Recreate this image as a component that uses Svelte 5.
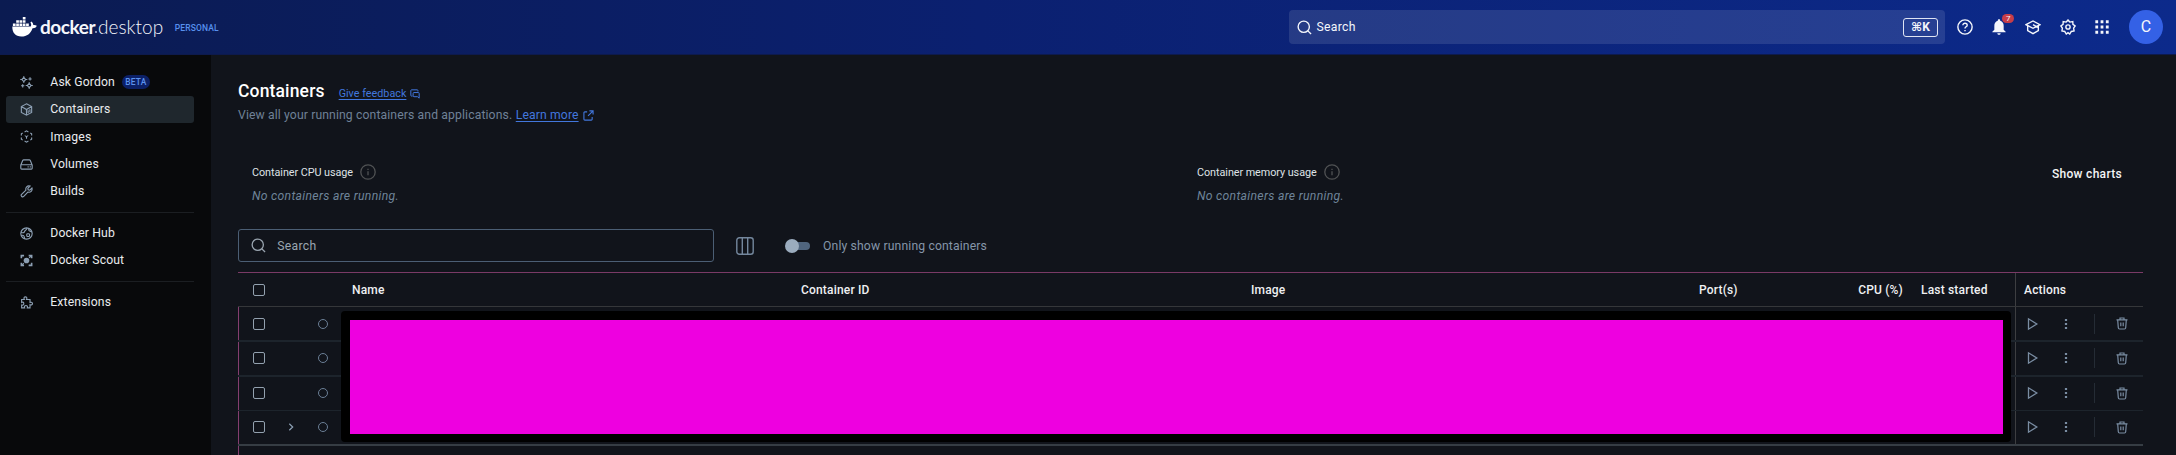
<script>
  const groups = [
    [
      { icon: 'spark', label: 'Ask Gordon', badge: 'BETA' },
      { icon: 'cube', label: 'Containers', active: true },
      { icon: 'image', label: 'Images' },
      { icon: 'volume', label: 'Volumes' },
      { icon: 'wrench', label: 'Builds' }
    ],
    [
      { icon: 'hub', label: 'Docker Hub' },
      { icon: 'scout', label: 'Docker Scout' }
    ],
    [{ icon: 'puzzle', label: 'Extensions' }]
  ];
  const rows = [{}, {}, {}, { group: true }];
</script>

{#snippet icon(name)}
  {#if name === 'spark'}
    <svg class="ic" viewBox="0 0 24 24"><path d="M7 2.500 10.500 6.500 7 10.500 3.500 6.500zM17 13.500l3.500 4-3.500 4-3.500-4z" /><path d="M7 .5v2M7 10.500v2M.5 6.500h3M10.500 6.500h3M17 11.500v2M17 21.500v2M10.500 17.500h3M20.500 17.500h3M18.500 2.500v6M15.500 5.500h6M5 15v6M2 18h6" /></svg>
  {:else if name === 'cube'}
    <svg class="ic" viewBox="0 0 24 24"><path d="M12 1.500 21.500 6.500v11L12 22.500 2.500 17.500v-11zM2.500 6.500 12 12l9.500-5.500M12 12v10.500" /><path d="M15 13.500v5M18.300 11.500v5.500" /></svg>
  {:else if name === 'image'}
    <svg class="ic" viewBox="0 0 24 24"><path d="M8.500 3.500 12 1.500l3.500 2M19 5.500l2.500 1.500v3M21.500 14v3L19 18.700M15.500 20.500 12 22.500l-3.500-2M5 18.700 2.500 17v-3M2.500 10V7L5 5.500" /><path class="fill" d="M8 9l4 2.200L16 9l-3 4.500V16h-2v-2.500z" /></svg>
  {:else if name === 'volume'}
    <svg class="ic" viewBox="0 0 24 24"><path d="M1.500 13 5 4.500Q5.500 3.500 7 3.500h10q1.500 0 2 1L22.500 13v6q0 1.500-1.500 1.500H3q-1.500 0-1.500-1.500zM1.500 12.500h21" /><path d="M14 16.500h2M18 16.500h2" /></svg>
  {:else if name === 'wrench'}
    <svg class="ic" viewBox="0 0 24 24"><path d="M18.500 2 14.500 6l.5 3 3 .500L22 5.500c1.500 5-2.500 9-7.500 7.500L6.500 21.500c-2 1.500-5.500-1-4-4L11 9.500C9.500 4.500 13.500.500 18.500 2z" /><path d="M5 19h.1" /></svg>
  {:else if name === 'hub'}
    <svg class="ic" viewBox="0 0 24 24"><circle cx="12" cy="12" r="10.500" /><path d="M2 9.500c4 2 6 1 6.500-1.500S13 6 12.500 2M17 3c-2.500 3 0 5 5 6M2.500 16c3-2 6 0 6 6" /><rect x="12.500" y="12.500" width="5" height="5" rx="1.500" /></svg>
  {:else if name === 'scout'}
    <svg class="ic" viewBox="0 0 24 24"><circle class="fill" cx="12" cy="12" r="5.200" /><path stroke-width="3" d="M2.500 8V3h5M16 3h5.500v5M21.500 16v5H16M7.500 21h-5v-5" /><path d="M17 7l3-3M4 20l3-3" /></svg>
  {:else if name === 'puzzle'}
    <svg class="ic" viewBox="0 0 24 24"><path d="M3 6.500h5C6.500 3 8 1.500 10 1.500S13.500 3 12 6.500h6.500V12c3-1 4.500 0 4.500 2s-1.500 3-4.500 2v6h-5c1-3-.5-4.500-2.500-4.500S7.500 19 8.500 22H3v-5.500c3 1 4-.5 4-2.500s-1-3.500-4-2z" /></svg>
  {:else if name === 'search'}
    <svg class="ic" viewBox="0 0 24 24"><circle cx="10.800" cy="10.800" r="9" /><path d="M17 17l5.500 5.500" /></svg>
  {:else if name === 'info'}
    <svg class="ic info" viewBox="0 0 16 16"><circle cx="8" cy="8" r="7.200" /><path d="M8 7.300v4M8 4.700v1.200" /></svg>
  {/if}
{/snippet}

{#snippet usage(title)}
  <div class="metric">
    <div class="metric-title"><span>{title}</span>{@render icon('info')}</div>
    <em>No containers are running.</em>
  </div>
{/snippet}

<div class="app">
  <header>
    <div class="brand">
      <svg class="whale" viewBox="0 0 25 20"><path d="M.300 9.600h18.400c.8-1.200.6-2.900-.3-4.100l.9-.9c1.300 1 1.900 2.100 2 3.400 1.200-.2 2.500 0 3.500.7-.8 1.900-2.300 2.600-4.300 2.500C18.700 16.600 15 19.500 9.300 19.500 3.500 19.500.200 16 .300 9.600z" /><path d="M.900 6.400h2.700V9H.900zM4.200 6.400h2.700V9H4.200zM7.500 6.400h2.700V9H7.500zM10.800 6.400h2.700V9h-2.700zM14.100 6.400h2.700V9h-2.700zM4.200 3.200h2.700v2.600H4.200zM7.500 3.200h2.700v2.600H7.500zM10.800 3.200h2.700v2.600h-2.700zM10.800 0h2.700v2.600h-2.700z" /></svg>
      <span class="word"><b>docker</b><i></i>desktop</span>
      <span class="plan">PERSONAL</span>
    </div>
    <div class="top-search">
      {@render icon('search')}<span>Search</span><kbd>⌘K</kbd>
    </div>
    <nav class="tools">
      <svg viewBox="0 0 24 24"><circle cx="12" cy="12" r="10.700" /><path d="M8.800 9.500c0-4.500 6.500-4 6.500-.3 0 2.500-3.300 2.500-3.300 5M12 16.500v2" /></svg>
      <div class="bell">
        <svg viewBox="0 0 24 24"><path class="fill" d="M12 .500c1.300 0 1.800.8 1.800 2C17.500 3.500 19 6.500 19 10v6l3 3v1H2v-1l3-3v-6c0-3.500 1.500-6.500 5.200-7.500 0-1.200.5-2 1.800-2zM9.500 21.300h5c0 3-5 3-5 0z" /></svg>
        <span>7</span>
      </div>
      <svg viewBox="0 0 24 24"><path d="M1.500 8.500 12 3l10.500 5.500L12 14zM4 10.500v7l8 4.500 8-4.500v-7M12 8.500l7 4" /></svg>
      <svg viewBox="0 0 24 24"><path d="M12 1.500l2.700 3.100 4.500-.8.2 4.200 3.300 2.500-2.300 3.200.7 4.200-4.200.8-2.300 3.800-2.600-2-2.600 2-2.300-3.800-4.200-.8.7-4.200L1.300 10.500 4.600 8l.2-4.200 4.500.8z" /><circle cx="12" cy="12" r="3.200" /></svg>
      <svg viewBox="0 0 24 24"><path class="fill" d="M2 2h4.200v4.200H2zM9.900 2h4.200v4.200H9.900zM17.800 2H22v4.200h-4.200zM2 9.900h4.200v4.200H2zM9.900 9.900h4.200v4.200H9.900zM17.800 9.900H22v4.200h-4.200zM2 17.800h4.200V22H2zM9.900 17.800h4.200V22H9.900zM17.800 17.800H22V22h-4.200z" /></svg>
    </nav>
    <div class="avatar">C</div>
  </header>

  <div class="body">
    <aside>
      {#each groups as group}
        <ul>
          {#each group as item}
            <li class:active={item.active}>
              {@render icon(item.icon)}<span>{item.label}</span>
              {#if item.badge}<small>{item.badge}</small>{/if}
            </li>
          {/each}
        </ul>
      {/each}
    </aside>

    <main>
      <div class="heading">
        <h1>Containers</h1>
        <a href="#feedback">Give feedback</a>
        <svg class="ic link-ic" viewBox="0 0 24 24"><path d="M6 17H3.500Q2 17 2 15.500v-12Q2 2 3.500 2h14Q19 2 19 3.500V6M9.500 8.500H20q2 0 2 2V22l-4-3.500H9.500q-2 0-2-2v-6q0-2 2-2z" /></svg>
      </div>
      <p class="intro">
        <span>View all your running containers and applications.</span>
        <a href="#learn">Learn more</a>
        <svg class="ic link-ic" viewBox="0 0 24 24"><path d="M9 4H4Q2 4 2 6v14q0 2 2 2h14q2 0 2-2v-5M14 2h8v8M22 2 11 13" /></svg>
      </p>

      <section class="metrics">
        {@render usage('Container CPU usage')}
        {@render usage('Container memory usage')}
        <button class="charts">Show charts</button>
      </section>

      <div class="filters">
        <div class="field">{@render icon('search')}<span>Search</span></div>
        <svg class="cols" viewBox="0 0 18 18"><rect x=".8" y=".8" width="16.400" height="16.400" rx="2.500" /><path d="M6.300 1v16M11.700 1v16" /></svg>
        <div class="switch"><i></i></div>
        <span class="switch-label">Only show running containers</span>
      </div>

      <div class="table">
        <div class="row head">
          <div class="cell check"><i class="box"></i></div>
          <div></div>
          <div></div>
          <div class="cell">Name</div>
          <div class="cell">Container ID</div>
          <div class="cell">Image</div>
          <div class="cell">Port(s)</div>
          <div class="cell cpu">CPU (%)</div>
          <div class="cell">Last started</div>
          <div class="cell actions-head">Actions</div>
        </div>
        <div class="rows">
          {#each rows as row}
            <div class="row">
              <div class="cell check"><i class="box"></i></div>
              <div class="mid">
                {#if row.group}<svg class="chev" viewBox="0 0 8 8"><path d="M2.300.8 5.700 4 2.300 7.200" /></svg>{/if}
              </div>
              <div class="mid"><i class="status"></i></div>
              <div class="actions">
                <svg class="play" viewBox="0 0 12 14"><path d="M1.500 1.800v10.400L9.800 7z" /></svg>
                <svg class="dots" viewBox="0 0 4 12"><path d="M.9.900h2.200v2.200H.900zM.9 4.900h2.200v2.200H.900zM.9 8.900h2.200v2.200H.900z" /></svg>
                <span class="sep"></span>
                <svg class="trash" viewBox="0 0 12 13"><path d="M.5 2.800h11M4 2.500V1h4v1.500M1.700 3l.6 7.800q.1 1.200 1.200 1.200h5q1.100 0 1.200-1.200l.6-7.800M4.800 5.500v3.800M7.200 5.500v3.800" /></svg>
              </div>
            </div>
          {/each}
          <div class="cover"></div>
        </div>
      </div>
    </main>
  </div>
</div>

<style>
  :global(body) { background: #11141b; }
  * { box-sizing: border-box; }
  .app { height: 455px; overflow: hidden; display: flex; flex-direction: column; background: #11141b; color: #e9ebee; font-family: Roboto, sans-serif; font-size: 12.2px; letter-spacing: .14px; }
  svg { display: block; flex: none; fill: none; stroke: currentColor; stroke-width: 2.1; }
  svg .fill { fill: currentColor; stroke: none; }
  .ic { width: 13px; height: 13px; }

  header { height: 55px; flex: none; display: flex; align-items: center; padding-right: 13px; background: linear-gradient(90deg, #0b1b51, #0b2070 45%, #0c2a8b); border-bottom: 1px solid #0d1a4c; color: #f4f6fb; }
  .brand { display: flex; align-items: center; width: 1289px; flex: none; padding-left: 12px; }
  .whale { width: 25px; height: 20px; fill: #fff; stroke: none; margin-top: -1px; }
  .word { display: flex; margin-left: 3px; font: 300 19px/24px Lato, sans-serif; letter-spacing: 0; }
  .word b { font-weight: 700; letter-spacing: -.45px; }
  .word i { width: 2px; height: 2px; margin: 16px 1px 0 0; background: #8490b5; }
  .plan { margin-left: 11.500px; font-size: 8.500px; font-weight: 500; letter-spacing: .15px; color: #5790ee; margin-top: 2px; }
  .top-search { width: 656px; flex: none; height: 34px; display: flex; align-items: center; border-radius: 4px; padding: 0 7px 0 8px; background: rgba(255, 255, 255, .11); }
  .top-search .ic { width: 15px; height: 15px; stroke-width: 2.2; margin-right: 4.500px; }
  .top-search span, .field span { letter-spacing: .3px; }
  kbd { margin-left: auto; width: 35px; height: 19px; border: 1px solid #dfe4f3; border-radius: 3px; font: 700 12px/17px Roboto, "DejaVu Sans", sans-serif; text-align: center; letter-spacing: 0; }
  .tools { display: flex; align-items: center; gap: 18.200px; margin-left: 12px; }
  .tools svg { width: 16px; height: 16px; }
  .bell { position: relative; }
  .bell span { position: absolute; left: 11px; top: -5px; width: 12px; height: 9px; border-radius: 5px; background: #c73d49; font-size: 8px; line-height: 9px; text-align: center; letter-spacing: 0; }
  .avatar { margin-left: auto; width: 34px; height: 34px; border-radius: 50%; background: #3461e6; font-size: 16px; line-height: 34px; text-align: center; letter-spacing: 0; }

  .body { flex: 1; display: flex; min-height: 0; }
  aside { width: 211px; flex: none; padding: 13.500px 17px 0 6px; background: #08090b; }
  ul { list-style: none; margin: 0; padding: 0; }
  ul + ul { margin-top: 7px; padding-top: 6.500px; border-top: 1px solid #1b1e22; }
  li { height: 27.300px; display: flex; align-items: center; padding-left: 14px; border-radius: 3px; }
  li.active { background: #1f272d; }
  li .ic { color: #8c9fb3; margin-right: 17.300px; }
  li small { margin-left: 7px; height: 14px; padding: 0 3.300px; border-radius: 7px; background: #0c2067; color: #5c93ee; font-size: 8.400px; line-height: 14px; font-weight: 500; letter-spacing: .2px; }

  main { flex: 1; min-width: 0; padding: 25px 33px 0 27px; }
  .heading { display: flex; align-items: center; height: 22px; }
  h1 { margin: 0; font-size: 17.500px; font-weight: 500; letter-spacing: .15px; color: #fff; }
  a { color: #4277dd; text-underline-offset: 2px; }
  .heading a { margin: 4px 4px 0 14px; font-size: 10.800px; letter-spacing: 0; }
  .link-ic { width: 11px; height: 11px; color: #4277dd; stroke-width: 2.4; }
  .heading .link-ic { width: 10px; height: 10px; margin-top: 6px; }
  .intro { display: flex; align-items: center; margin: 3px 0 0; height: 20px; letter-spacing: .12px; color: #6f8197; }
  .intro a { margin: 0 4.500px 0 3.500px; }

  .metrics { display: flex; height: 104px; padding: 39px 21px 0 14px; }
  .metric:first-child { width: 945px; flex: none; }
  .metric-title { display: flex; align-items: center; height: 16px; font-size: 10.800px; letter-spacing: -.05px; color: #dfe2e6; }
  .info { width: 16px; height: 16px; margin-left: 7.300px; color: #505254; stroke-width: 1.3; }
  em { display: block; margin-top: 8px; line-height: 16px; letter-spacing: .3px; color: #6f8499; }
  .charts { margin: 2px 0 0 auto; height: 16px; padding: 0; border: 0; background: none; color: #f4f5f7; font: 500 12px/16px Roboto, sans-serif; letter-spacing: .3px; white-space: nowrap; }

  .filters { display: flex; align-items: center; height: 33px; }
  .field { width: 476px; height: 33px; display: flex; align-items: center; padding-left: 12px; border: 1px solid #4b5e74; border-radius: 3px; color: #9aa5b0; }
  .field .ic { width: 15px; height: 15px; margin-right: 11.300px; }
  .cols { width: 18px; height: 18px; margin: 0 32px 0 22px; color: #74879d; stroke-width: 1.4; }
  .switch { width: 24px; height: 8px; border-radius: 4px; background: #50657e; }
  .switch i { display: block; width: 14px; height: 14px; margin: -3px 0 0 -1px; border-radius: 50%; background: #9bacbe; }
  .switch-label { margin-left: 13px; color: #8596a9; }

  .table { margin-top: 10px; width: 1905px; }
  .row { display: grid; grid-template-columns: 41px 24px 39px 449px 450px 448px 160px 62px 104px 128px; height: 35px; border-bottom: 2px solid #1d242c; align-items: center; }
  .row.head { height: 35px; border-top: 1px solid #7a3a66; border-bottom: 1px solid #35373a; font-size: 12px; font-weight: 500; letter-spacing: .18px; color: #eff0f2; }
  .cell { padding-left: 10px; white-space: nowrap; }
  .check { padding-left: 15px; }
  .cpu { padding: 0 8px 0 0; text-align: right; }
  .actions-head { height: 33px; line-height: 34px; padding-left: 8px; border-left: 1px solid #3d3e41; }
  .box { display: block; width: 12px; height: 12px; border: 1px solid #93a1af; border-radius: 2px; }
  .mid { display: flex; justify-content: center; }
  .rows { position: relative; box-shadow: inset 1px 0 #843e70; height: 160px; }
  .rows .row + .row { padding-bottom: 1px; }
  .rows .row:nth-child(3) { height: 34px; border-bottom-width: 1px; }
  .rows .row:nth-child(4) { border-bottom-color: #363d44; }
  .rows .row + .row .actions { margin-bottom: -1px; padding-bottom: 1px; }
  .status { width: 10px; height: 10px; border: 1px solid #6b7f96; border-radius: 50%; }
  .chev { width: 8px; height: 8px; color: #8c9fb3; stroke-width: 1.2; }
  .actions { grid-column: 10; align-self: stretch; display: flex; align-items: center; padding-left: 11px; border-left: 1px solid #3d3e41; color: #7a8da3; }
  .play { width: 12px; height: 14px; stroke-width: 1.3; }
  .dots { width: 4px; height: 12px; margin: 0 26px 0 24.800px; fill: currentColor; stroke: none; }
  .sep { width: 1px; height: 20px; background: #252c35; }
  .trash { width: 12px; height: 13px; margin-left: 21px; stroke-width: 1.2; }
  .cover { position: absolute; left: 103px; top: 4px; width: 1670px; height: 131px; border: solid #000; border-width: 9px 8px 8px 9px; border-radius: 4px; background: #ee00e0; }
</style>
